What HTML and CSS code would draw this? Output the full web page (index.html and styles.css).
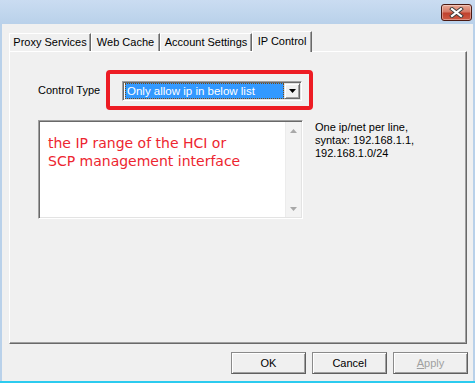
FILE: index.html
```html
<!DOCTYPE html>
<html lang="en">
<head>
    <meta charset="UTF-8">
    <meta name="viewport" content="width=device-width, initial-scale=1.0">
    <title>IP Control</title>
    <link rel="stylesheet" href="styles.css">
</head>
<body>
    <div class="window">
        <div class="titlebar">
            <div class="close-btn">
                <svg width="15" height="11" viewBox="0 0 15 11">
                    <path d="M3 2 L12 9 M12 2 L3 9" stroke="#3b3b3b" stroke-width="4" stroke-linecap="square"/>
                    <path d="M3 2 L12 9 M12 2 L3 9" stroke="#ffffff" stroke-width="2.2" stroke-linecap="square"/>
                </svg>
            </div>
        </div>
        <div class="client">
            <div class="tabs">
                <div class="tab tab-proxy">Proxy Services</div>
                <div class="tab tab-cache">Web Cache</div>
                <div class="tab tab-account">Account Settings</div>
                <div class="tab tab-ip active">IP Control</div>
            </div>
            <div class="panel">
                <div class="row">
                    <span class="label">Control Type</span>
                    <div class="highlight">
                        <div class="combo">
                            <span class="combo-value">Only allow ip in below list</span>
                            <span class="combo-btn">
                                <svg width="7" height="4" viewBox="0 0 7 4"><path d="M0 0 H7 L3.5 4 Z" fill="#000"/></svg>
                            </span>
                        </div>
                    </div>
                </div>
                <div class="row list-row">
                    <div class="listbox">
                        <div class="list-text">the IP range of the HCI or<br>SCP management interface</div>
                        <div class="scrollbar">
                            <span class="arrow"><svg width="7" height="4" viewBox="0 0 7 4"><path d="M3.5 0 L7 4 H0 Z" fill="#a8a8a8"/></svg></span>
                            <span class="arrow"><svg width="7" height="4" viewBox="0 0 7 4"><path d="M0 0 H7 L3.5 4 Z" fill="#a8a8a8"/></svg></span>
                        </div>
                    </div>
                    <div class="hint">One ip/net per line,<br>syntax: 192.168.1.1,<br>192.168.1.0/24</div>
                </div>
            </div>
            <div class="buttons">
                <button class="btn">OK</button>
                <button class="btn">Cancel</button>
                <button class="btn disabled"><u>A</u>pply</button>
            </div>
        </div>
    </div>
</body>
</html>
```
FILE: styles.css
```css
body {
    margin: 0;
    font-family: "Liberation Sans", Arial, sans-serif;
    font-size: 11px;
    color: #000;
}
.window {
    width: 475px;
    height: 383px;
    box-sizing: border-box;
    background-color: #b9d1ea;
    border-bottom: 2px solid #2ccbef;
    display: flex;
    flex-direction: column;
}
.titlebar {
    height: 24px;
    box-sizing: border-box;
    padding: 4px 3px 0 0;
    background: linear-gradient(#cadcf1, #b9d1ea);
    display: flex;
    justify-content: flex-end;
}
.close-btn {
    width: 31px;
    height: 17px;
    box-sizing: border-box;
    border: 1px solid #4b1912;
    border-radius: 3px;
    background: linear-gradient(#e9a996, #d57966 45%, #c0412d 55%, #cf5a44);
    box-shadow: inset 0 0 0 1px rgba(255, 255, 255, 0.35);
    display: flex;
    align-items: center;
    justify-content: center;
}
.client {
    flex: 1;
    margin: 0 2px;
    background-color: #f0f0f0;
    padding: 7px 6px 7px 7px;
    display: flex;
    flex-direction: column;
}
.tabs {
    height: 20px;
    display: flex;
    align-items: flex-end;
}
.tab {
    height: 18px;
    box-sizing: border-box;
    border-top: 1px solid #fff;
    border-left: 1px solid #fff;
    border-right: 1px solid #696969;
    box-shadow: inset -1px 0 #a0a0a0;
    text-align: center;
    line-height: 17px;
    background-color: #f0f0f0;
}
.tab-proxy { width: 82px; }
.tab-cache { width: 69px; }
.tab-account { width: 92px; }
.tab-ip { width: 60px; }
.tab.active {
    height: 21px;
    margin-bottom: -1px;
    line-height: 18px;
    position: relative;
    z-index: 1;
}
.panel {
    flex: 1;
    border-top: 1px solid #fff;
    border-left: 1px solid #fff;
    border-right: 1px solid #696969;
    border-bottom: 1px solid #696969;
    box-shadow: inset -1px -1px #a0a0a0;
    padding: 18px 0 0 28px;
}
.row {
    display: flex;
    align-items: center;
}
.label {
    width: 68px;
}
.highlight {
    border: 4px solid #ed1c24;
    border-radius: 4px;
    padding: 7px 7px 5px 12px;
}
.combo {
    width: 180px;
    height: 20px;
    box-sizing: border-box;
    border: 1px solid;
    border-color: #a0a0a0 #fff #fff #a0a0a0;
    box-shadow: inset 1px 1px #696969, inset -1px -1px #e3e3e3;
    background-color: #fff;
    padding: 1px 1px 1px 2px;
    display: flex;
}
.combo-value {
    flex: 1;
    box-sizing: border-box;
    background-color: #3399ff;
    color: #fff;
    border: 1px dotted #7a4a10;
    font-size: 11.5px;
    line-height: 14px;
    padding-left: 1px;
    white-space: nowrap;
    overflow: hidden;
}
.combo-btn {
    width: 16px;
    box-sizing: border-box;
    background-color: #f0f0f0;
    border: 1px solid;
    border-color: #e3e3e3 #696969 #696969 #e3e3e3;
    box-shadow: inset 1px 1px #fff, inset -1px -1px #a0a0a0;
    display: flex;
    align-items: center;
    justify-content: center;
}
.list-row {
    margin-top: 10px;
    align-items: flex-start;
}
.listbox {
    width: 265px;
    height: 99px;
    box-sizing: border-box;
    border: 1px solid;
    border-color: #a0a0a0 #fff #fff #a0a0a0;
    box-shadow: inset 1px 1px #696969, inset -1px -1px #e3e3e3;
    background-color: #fff;
    padding: 1px;
    display: flex;
}
.list-text {
    flex: 1;
    padding: 12px 0 0 8px;
    font-family: "DejaVu Sans", Verdana, sans-serif;
    font-size: 14px;
    line-height: 18px;
    color: #ed2530;
}
.scrollbar {
    width: 15px;
    background-color: #f3f3f3;
    border-left: 1px solid #ececec;
    display: flex;
    flex-direction: column;
    justify-content: space-between;
}
.arrow {
    height: 17px;
    display: flex;
    align-items: center;
    justify-content: center;
}
.hint {
    margin-left: 12px;
    margin-top: 1px;
    line-height: 13px;
}
.buttons {
    margin-top: 8px;
    margin-right: -1px;
    display: flex;
    justify-content: flex-end;
    gap: 6px;
}
.btn {
    width: 75px;
    height: 22px;
    box-sizing: border-box;
    margin: 0;
    padding: 0;
    font-family: "Liberation Sans", Arial, sans-serif;
    font-size: 11px;
    color: #000;
    background-color: #f0f0f0;
    border: 1px solid;
    border-color: #8a8a8a #5f5f5f #5f5f5f #8a8a8a;
    box-shadow: inset 1px 1px #fff, inset -1px -1px #a0a0a0;
}
.btn.disabled {
    color: #a0a0a0;
}
.btn u {
    text-decoration: underline;
}
```
